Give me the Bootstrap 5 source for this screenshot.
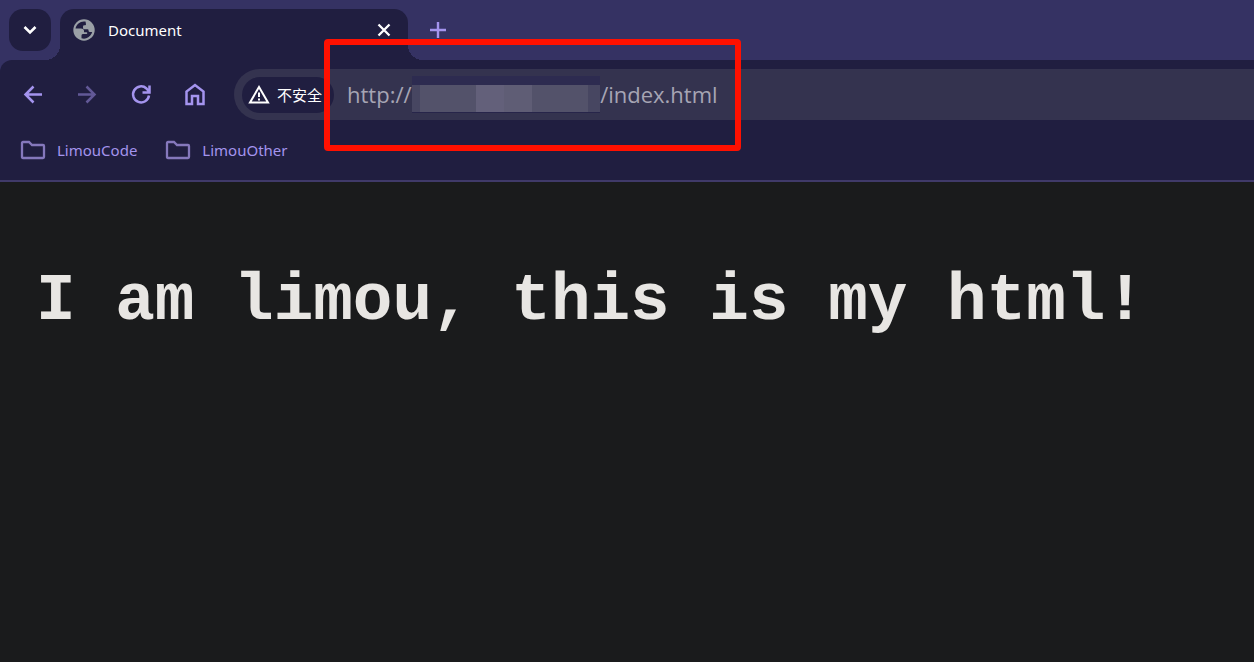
<!DOCTYPE html>
<html lang="en">
<head>
<meta charset="utf-8">
<meta name="viewport" content="width=device-width, initial-scale=1">
<title>Document</title>
<link href="https://cdn.jsdelivr.net/npm/bootstrap@5.3.0/dist/css/bootstrap.min.css" rel="stylesheet">
<style>
  :root { --strip: #353263; --chrome: #201e40; --omni: #34334f; --accent: #a494ee; }
  body { background: #1a1b1c; font-family: "Noto Sans", "Noto Sans CJK SC", sans-serif; overflow-x: hidden; }
  .tab-strip { background: var(--strip); height: 60px; padding: 9px 0 0 9px; }
  .icon-btn { background: none; border: 0; padding: 0; display: flex; color: var(--accent); flex: none; }
  .tab-menu { background: var(--chrome); color: #fff; width: 42px; height: 42px; border-radius: 14px; align-items: center; justify-content: center; }
  .browser-tab { background: var(--chrome); color: #fff; width: 348px; height: 51px; margin-left: 9px; padding: 0 16px 9px 13px; border-radius: 14px 14px 0 0; font-size: 15px; position: relative; }
  .browser-tab::before, .browser-tab::after { content: ""; position: absolute; bottom: 0; width: 15px; height: 15px; }
  .browser-tab::before { right: 100%; background: radial-gradient(circle at 0 0, transparent 15px, var(--chrome) 15px); }
  .browser-tab::after { left: 100%; background: radial-gradient(circle at 100% 0, transparent 15px, var(--chrome) 15px); }
  .tab-label { margin-left: 13px; }
  .new-tab { margin: 13px 0 0 22px; }
  .toolbar { background: var(--strip); }
  .toolbar-inner { background: var(--chrome); border-top-left-radius: 12px; padding: 9px 0 0 20px; }
  .nav-icons { gap: 28px; }
  .omnibox { background: var(--omni); height: 51px; margin-left: 26px; padding-left: 8px; border-radius: 26px 0 0 26px; }
  .site-chip { background: var(--chrome); color: #fff; height: 36px; width: 92px; padding: 0 5px; border-radius: 18px; font-family: "Noto Sans CJK SC", sans-serif; font-size: 15px; line-height: 20px; gap: 6px; white-space: nowrap; }
  .address { background: none; border: 0; outline: 0; color: #a6a5b4; font-family: "Open Sans", sans-serif; font-size: 22px; line-height: 32px; padding: 0 0 2px; width: 100%; }
  .address-wrap { margin-left: 13px; }
  .mosaic { position: absolute; left: 65px; top: -2px; width: 188px; height: 37px; background: linear-gradient(#2d2b50 0 9px, transparent 9px 36px, #27254a 36px), linear-gradient(90deg, #474661 0 8px, #53526a 8px 64px, #63607a 64px 92px, #5f5d75 92px 120px, #53526a 120px 176px, #474661 176px); }
  .bookmarks { background: var(--chrome); border-bottom: 2px solid #403a69; height: 62px; padding: 0 20px; gap: 28px; }
  .bookmarks a { color: var(--accent); font-size: 15px; gap: 11px; }
  .bookmarks svg { color: #8578bc; }
  .highlight-frame { position: absolute; left: 324px; top: 39px; width: 417px; height: 112px; border: 6px solid #ff1000; border-radius: 4px; pointer-events: none; }
  .page-title { font-family: "Liberation Mono", monospace; font-weight: 700; font-size: 66px; line-height: 78px; color: #e8e6e3; margin: 81px 0 0 36px; white-space: nowrap; }
</style>
</head>
<body>
<header class="position-relative">
  <div class="tab-strip d-flex align-items-start">
    <button class="icon-btn tab-menu" type="button" aria-label="Search tabs">
      <svg width="14" height="10" viewBox="0 0 14 10" fill="none" stroke="currentColor" stroke-width="2.6"><path d="M1.500 2 7 7.500 12.500 2"/></svg>
    </button>
    <div class="browser-tab d-flex align-items-center">
      <svg width="22" height="22" viewBox="0 0 22 22"><circle cx="11" cy="11" r="10.700" fill="#9aa0a6"/><path fill="#201e40" d="M12.500 2.600C7.500 1.800 3.500 5 2.500 9.500H8q3 0 3 2.500v1.200h2.500q.8 0 .8.900t-.8.900H9.800q-1.300 0-1.300 1.500v2.800c4 1.200 8-.5 10-4.500l.7-1.800H17q-1.500 0-1.500-1.500V11q0-.8-1-.8h-3q-1.500 0-1.500-1.500V7.500q0-1.300 1.300-1.300h.9q.8 0 .8-1z"/></svg>
      <span class="tab-label flex-grow-1">Document</span>
      <button class="icon-btn text-white" type="button" aria-label="Close tab">
        <svg width="16" height="16" viewBox="0 0 16 16" stroke="currentColor" stroke-width="2.300"><path d="M2.500 2.500l11 11m0-11l-11 11"/></svg>
      </button>
    </div>
    <button class="icon-btn new-tab" type="button" aria-label="New tab">
      <svg width="16" height="16" viewBox="0 0 16 16" stroke="currentColor" stroke-width="2.400"><path d="M8 0v16M0 8h16"/></svg>
    </button>
  </div>
  <div class="toolbar">
    <div class="toolbar-inner d-flex align-items-center">
      <nav class="nav-icons d-flex" aria-label="Navigation">
        <button class="icon-btn" type="button" aria-label="Back"><svg width="26" height="26" viewBox="0 0 26 26" fill="none" stroke="currentColor" stroke-width="2.500"><path d="M22 12.500H6M13.500 4.500l-8 8 8 8"/></svg></button>
        <button class="icon-btn opacity-50" type="button" aria-label="Forward"><svg width="26" height="26" viewBox="0 0 26 26" fill="none" stroke="currentColor" stroke-width="2.500"><path d="M4 12.500h16M12.500 4.500l8 8-8 8"/></svg></button>
        <button class="icon-btn" type="button" aria-label="Reload"><svg width="26" height="26" viewBox="0 0 26 26" fill="none" stroke="currentColor" stroke-width="2.500"><path d="M21 13.500A8 8 0 1 1 18.500 6.500l2.500 3M21.500 3.500v7H14.500"/></svg></button>
        <button class="icon-btn" type="button" aria-label="Home"><svg width="26" height="26" viewBox="0 0 26 26" fill="none" stroke="currentColor" stroke-width="2.500"><path d="M4.500 22V9.500L13 3 21.500 9.500V22H16v-8h-6v8z"/></svg></button>
      </nav>
      <div class="omnibox d-flex align-items-center flex-grow-1">
        <button class="icon-btn site-chip d-flex align-items-center" type="button">
          <svg class="flex-shrink-0" width="24" height="20" viewBox="0 0 24 20" fill="none" stroke="currentColor" stroke-width="2"><path d="M12 2 3 17.500h18zM12 7.500v4.500M12 13.500v2"/></svg>
          <span>不安全</span>
        </button>
        <div class="address-wrap position-relative flex-grow-1">
          <input class="address d-block" type="text" aria-label="Address" value="http://                                 /index.html">
          <div class="mosaic"></div>
        </div>
      </div>
    </div>
  </div>
  <nav class="bookmarks d-flex align-items-center" aria-label="Bookmarks">
    <a href="#" class="d-flex align-items-center text-decoration-none"><svg width="26" height="20" viewBox="0 0 26 20" fill="none" stroke="currentColor" stroke-width="2.300"><path d="M2 3q0-1 1-1h6l3 3h11q1 0 1 1v11q0 1-1 1H3q-1 0-1-1z"/></svg>LimouCode</a>
    <a href="#" class="d-flex align-items-center text-decoration-none"><svg width="26" height="20" viewBox="0 0 26 20" fill="none" stroke="currentColor" stroke-width="2.300"><path d="M2 3q0-1 1-1h6l3 3h11q1 0 1 1v11q0 1-1 1H3q-1 0-1-1z"/></svg>LimouOther</a>
  </nav>
  <div class="highlight-frame"></div>
</header>
<main>
  <h1 class="page-title">I am limou, this is my html!</h1>
</main>
<script src="https://cdn.jsdelivr.net/npm/bootstrap@5.3.0/dist/js/bootstrap.bundle.min.js"></script>
</body>
</html>
